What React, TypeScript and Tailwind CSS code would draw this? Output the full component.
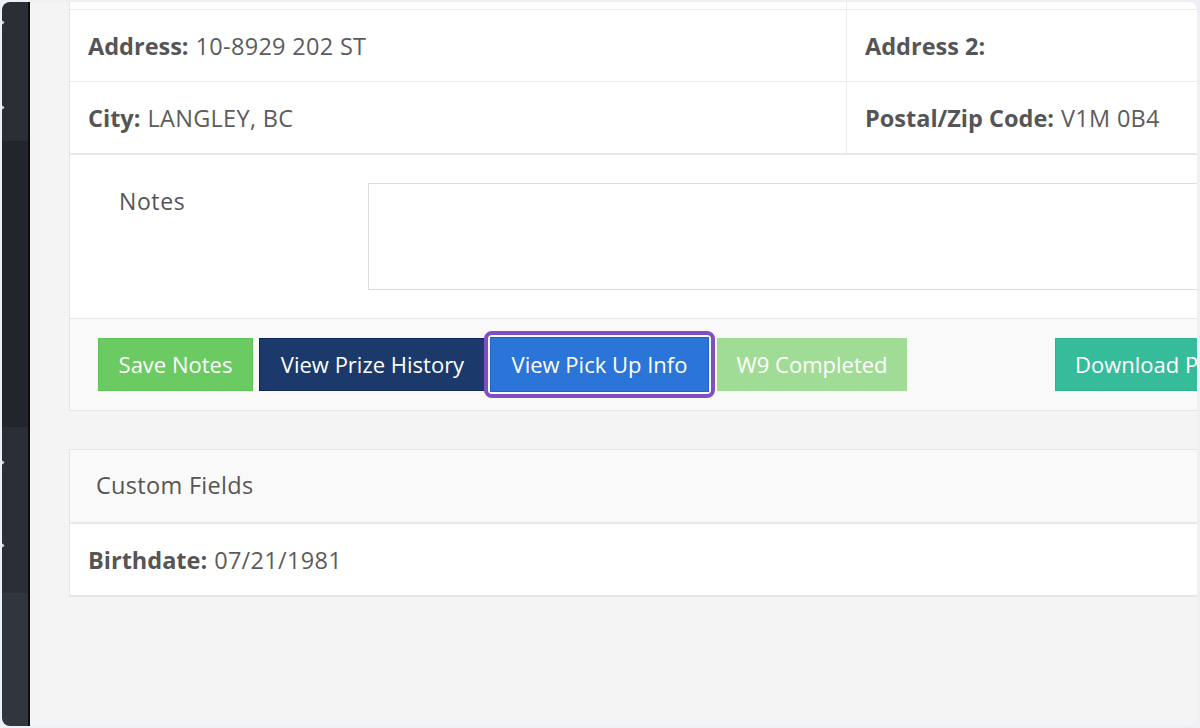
import React from "react";

function Field({ label, value }: { label: string; value?: string }) {
    return (
        <div className="flex items-center h-full pl-[18px] pt-[2px] text-[23.5px] text-[#555]">
            <span className="font-bold">{label}</span>
            {value && <span className="ml-[7px] text-[#5c5c5c] tracking-[0.3px]">{value}</span>}
        </div>
    );
}

function SideMark() {
    return <div className="w-[3px] h-[3px] bg-[#cfd2d6] rotate-45 -ml-[1px]" />;
}

export default function App() {
    return (
        <div className="w-full h-screen bg-[#eef0f5] pt-[2px] pb-[2px] pl-[2px] pr-[3px]" style={{ fontFamily: '"Open Sans", "Liberation Sans", sans-serif' }}>
            <div className="flex h-full rounded-[8px] overflow-hidden">
                {/* sidebar */}
                <div className="w-[26px] flex flex-col shrink-0">
                    <div className="h-[139px] bg-[#2a2e35] flex flex-col pt-[19px] gap-[82px]">
                        <SideMark />
                        <SideMark />
                    </div>
                    <div className="h-[286px] bg-[#22252b]" />
                    <div className="h-[166px] bg-[#2a2e36] flex flex-col pt-[34px] gap-[80px]">
                        <SideMark />
                        <SideMark />
                    </div>
                    <div className="flex-1 bg-[#2f363e]" />
                </div>
                <div className="w-[2px] bg-[#0d0d0d] shrink-0" />

                {/* content */}
                <div className="flex-1 bg-[#f4f4f4] overflow-hidden pl-[39px]">
                    <div className="w-[1300px]">
                        <div className="bg-white border-l border-[#e6e6e6]">
                            <div className="flex h-[8px] border-b border-[#ebebeb]">
                                <div className="w-[777px] border-r border-[#ebebeb]" />
                            </div>
                            <div className="flex h-[72px] border-b border-[#ebebeb]">
                                <div className="w-[777px] border-r border-[#ebebeb]">
                                    <Field label="Address:" value="10-8929 202 ST" />
                                </div>
                                <div className="flex-1">
                                    <Field label="Address 2:" />
                                </div>
                            </div>
                            <div className="flex h-[73px] border-b-2 border-[#e8e8e8]">
                                <div className="w-[777px] border-r border-[#ebebeb]">
                                    <Field label="City:" value="LANGLEY, BC" />
                                </div>
                                <div className="flex-1">
                                    <Field label="Postal/Zip Code:" value="V1M 0B4" />
                                </div>
                            </div>
                            <div className="flex h-[163px] pt-[28px]">
                                <div className="w-[298px] pl-[49px] text-[23px] text-[#555] tracking-[0.6px] leading-[36px]">Notes</div>
                                <div className="w-[900px] h-[107px] border border-[#dddddd] bg-white" />
                            </div>
                            <div className="h-[93px] bg-[#f9f9f9] border-t border-b border-[#e6e6e6] flex items-center pl-[28px] text-[22px] text-white">
                                <div className="flex items-center">
                                    <button className="h-[53px] w-[155px] bg-[#6bca62] border border-[#5fc256]">Save Notes</button>
                                    <button className="h-[53px] w-[227px] ml-[6px] bg-[#1b3a6b] border border-[#0f2458]">View Prize History</button>
                                    <div className="ml-[-2px] rounded-[8px] border-[4px] border-[#7e4fc2] p-[2px]">
                                        <button className="h-[55px] w-[219px] bg-[#2b74d8] border border-[#1e63c8]">View Pick Up Info</button>
                                    </div>
                                    <button className="h-[53px] w-[190px] ml-[2px] bg-[#a1dc96]">W9 Completed</button>
                                    <button className="h-[53px] w-[200px] ml-[148px] bg-[#37bc9b] border border-[#2db48f] text-left pl-[19px]">Download PDF</button>
                                </div>
                            </div>
                        </div>

                        <div className="mt-[38px] bg-white border border-r-0 border-[#e6e6e6] border-b-2">
                            <div className="h-[74px] bg-[#f9f9f9] border-b-2 border-[#e8e8e8] flex items-center pl-[26px] text-[23.5px] text-[#555] tracking-[0.3px]">
                                Custom Fields
                            </div>
                            <div className="h-[71px]">
                                <Field label="Birthdate:" value="07/21/1981" />
                            </div>
                        </div>
                    </div>
                </div>
            </div>
        </div>
    );
}
